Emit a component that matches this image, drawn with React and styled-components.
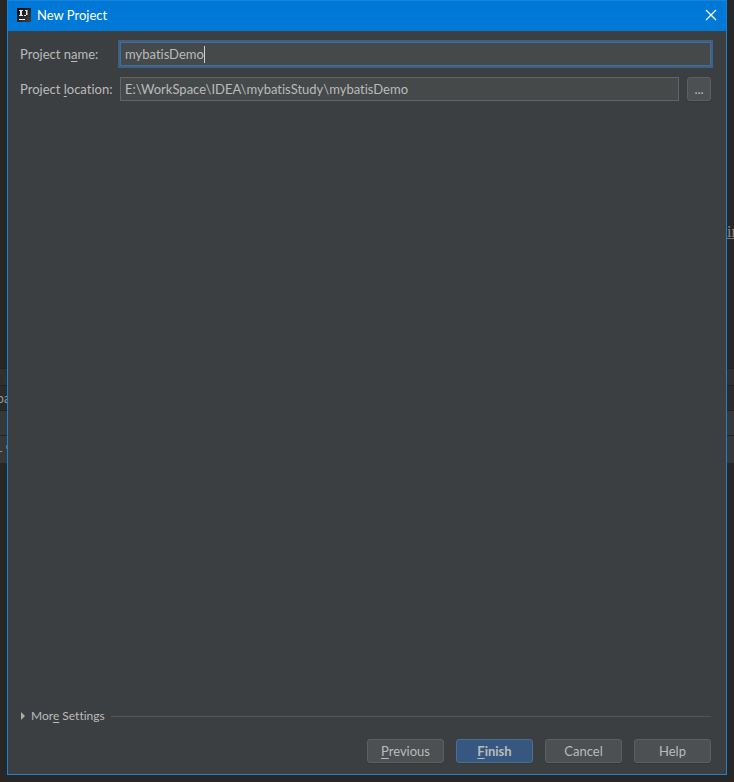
import { useState } from "react"
import styled, { createGlobalStyle } from "styled-components"

const GlobalStyle = createGlobalStyle`
  * {
    box-sizing: border-box;
  }
  body {
    margin: 0;
    background: #272727;
    color: #bbbbbb;
    font-family: Lato, "Open Sans", sans-serif;
    font-size: 13px;
    font-variant-ligatures: none;
    line-height: 18px;
  }
  button,
  input {
    font: inherit;
    font-variant-ligatures: none;
    color: inherit;
  }
`

const Desktop = styled.div`
  display: flex;
  min-height: 100vh;
  padding-bottom: 7px;
`
const Editor = styled.div`
  display: flex;
  flex-direction: column;
  width: 7px;
  overflow: hidden;
  background: #272727;
`
const EditorGap = styled.div`
  height: ${(props) => props.$size}px;
`
const EditorRow = styled.div`
  display: flex;
  align-items: center;
  justify-content: center;
  height: ${(props) => props.$size}px;
  border-top: 1px solid #222222;
  background: ${(props) => props.$bg};
  color: #999999;
  font-family: "Noto Sans CJK SC", sans-serif;
  font-size: 12px;
  white-space: nowrap;
`
const EditorLink = styled.span`
  color: #98897a;
  font-family: "Liberation Serif", serif;
  font-size: 16px;
  text-decoration: underline;
  text-decoration-color: #777777;
`
const Dialog = styled.form`
  display: flex;
  flex: 1;
  flex-direction: column;
  min-width: 0;
  border: 1px solid #1883d7;
  background: #3c3f41;
`
const TitleBar = styled.header`
  display: flex;
  align-items: center;
  height: 30px;
  padding: 0 1px 2px 9px;
  background: #0078d7;
  color: white;
`
const Title = styled.h1`
  flex: 1;
  margin: 0 0 0 6px;
  font-size: 13px;
  font-weight: 400;
`
const CloseButton = styled.button`
  display: flex;
  align-items: center;
  justify-content: center;
  width: 28px;
  height: 28px;
  padding: 0;
  border: none;
  background: transparent;
`
const Content = styled.div`
  display: flex;
  flex: 1;
  flex-direction: column;
  padding: 11px 15px 11px 12px;
`
const Row = styled.div`
  display: flex;
  align-items: center;
  margin-bottom: 11px;
`
const Label = styled.label`
  width: 100px;
  white-space: nowrap;
`
const Field = styled.div`
  display: flex;
  flex: 1;
  align-items: center;
  min-width: 0;
  height: 24px;
  padding-left: 4px;
  border: 1px solid ${(props) => (props.$focused ? "#466d94" : "#646464")};
  background: #45494a;
  box-shadow: ${(props) => (props.$focused ? "0 0 0 2px #3d6185" : "none")};
`
const TextInput = styled.input`
  field-sizing: content;
  max-width: 100%;
  height: 20px;
  padding: 0;
  border: none;
  outline: none;
  background: transparent;
  caret-color: transparent;
`
const Caret = styled.span`
  width: 1px;
  height: 17px;
  background: #d0d0d0;
`
const Button = styled.button`
  width: 77px;
  height: 24px;
  padding: 0;
  border: 1px solid ${(props) => (props.$primary ? "#4c708c" : "#5e6060")};
  border-radius: 3px;
  background: ${(props) => (props.$primary ? "#365880" : "#4c5052")};
  box-shadow: 0 1px 1px #36393a;
  font-weight: ${(props) => (props.$primary ? 700 : 400)};
`
const BrowseButton = styled(Button)`
  width: 24px;
  margin-left: 8px;
`
const Mnemonic = styled.span`
  text-decoration: underline;
  text-underline-offset: 2px;
`
const Settings = styled.div`
  display: flex;
  align-items: center;
  gap: 6px;
  margin-top: auto;
`
const SettingsToggle = styled.button`
  display: flex;
  align-items: center;
  gap: 6px;
  padding: 0 0 0 1px;
  border: none;
  background: transparent;
  font-size: 12px;
`
const Line = styled.div`
  flex: 1;
  height: 1px;
  background: #515456;
`
const Footer = styled.footer`
  display: flex;
  justify-content: flex-end;
  gap: 12px;
  margin-top: 14px;
`

const IdeaLogo = () => (
  <svg width="14" height="14" viewBox="0 0 14 14" shapeRendering="crispEdges" aria-hidden="true">
    <defs>
      <linearGradient id="logo" x1="0" y1="0" x2="1" y2="1">
        <stop offset="0" stopColor="#090909" />
        <stop offset="1" stopColor="#424242" />
      </linearGradient>
    </defs>
    <rect width="14" height="14" fill="url(#logo)" />
    <g fill="#e4e4e4">
      <path d="M2 2h4v1H2zM3 3h2v4H3zM2 7h4v1H2z" />
      <path d="M9 2h1v5H9zM7 7h2v1H7zM8 2h1v1H8z" />
    </g>
    <path d="M10 2h1v5h-1z" fill="#8c8c8c" />
    <rect x="2" y="11" width="6" height="1" fill="white" />
  </svg>
)

const App = () => {
  const [name, setName] = useState("mybatisDemo")
  const [location, setLocation] = useState("E:\\WorkSpace\\IDEA\\mybatisStudy\\mybatisDemo")

  return (
    <>
      <GlobalStyle />
      <Desktop>
        <Editor>
          <EditorGap $size={368} />
          <EditorRow $size={17} $bg="#303030" />
          <EditorRow $size={25} $bg="#2b2b2b">ba</EditorRow>
          <EditorRow $size={25} $bg="#36383a" />
          <EditorRow $size={28} $bg="#36383a">- '</EditorRow>
        </Editor>
        <Dialog onSubmit={(e) => e.preventDefault()}>
          <TitleBar>
            <IdeaLogo />
            <Title>New Project</Title>
            <CloseButton type="button" aria-label="Close">
              <svg width="12" height="12" viewBox="0 0 12 12">
                <path d="M1 1l10 10M11 1L1 11" stroke="white" strokeWidth="1.3" />
              </svg>
            </CloseButton>
          </TitleBar>
          <Content>
            <Row>
              <Label htmlFor="name">
                Project n<Mnemonic>a</Mnemonic>me:
              </Label>
              <Field $focused>
                <TextInput id="name" value={name} onChange={(e) => setName(e.target.value)} />
                <Caret />
              </Field>
            </Row>
            <Row>
              <Label htmlFor="location">
                Project <Mnemonic>l</Mnemonic>ocation:
              </Label>
              <Field>
                <TextInput id="location" value={location} onChange={(e) => setLocation(e.target.value)} />
              </Field>
              <BrowseButton type="button">...</BrowseButton>
            </Row>
            <Settings>
              <SettingsToggle type="button">
                <svg width="4" height="8" viewBox="0 0 4 8">
                  <path d="M0 0l4 4-4 4z" fill="#adadad" />
                </svg>
                <span>
                  Mor<Mnemonic>e</Mnemonic> Settings
                </span>
              </SettingsToggle>
              <Line />
            </Settings>
            <Footer>
              <Button type="button">
                <Mnemonic>P</Mnemonic>revious
              </Button>
              <Button type="submit" $primary>
                <Mnemonic>F</Mnemonic>inish
              </Button>
              <Button type="button">Cancel</Button>
              <Button type="button">Help</Button>
            </Footer>
          </Content>
        </Dialog>
        <Editor>
          <EditorGap $size={223} />
          <EditorLink>in</EditorLink>
          <EditorGap $size={127} />
          <EditorRow $size={17} $bg="#303030" />
          <EditorRow $size={25} $bg="#2b2b2b" />
          <EditorRow $size={25} $bg="#36383a" />
          <EditorRow $size={28} $bg="#36383a" />
        </Editor>
      </Desktop>
    </>
  )
}

export default App
